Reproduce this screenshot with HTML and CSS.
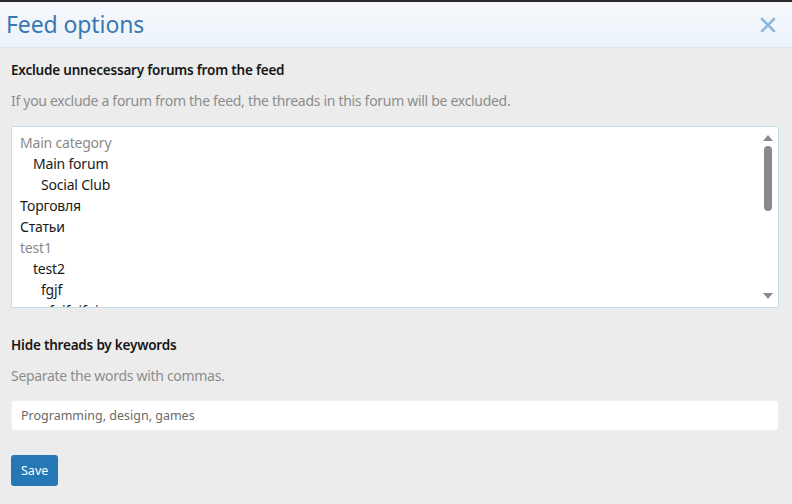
FILE: index.html
```html
<!DOCTYPE html>
<html>
<head>
<meta charset="utf-8">
<link rel="stylesheet" href="styles.css">
</head>
<body>
<div class="topline"></div>
<div class="overlay">
  <div class="header">
    <h1 class="title">Feed options</h1>
    <span class="close">
      <svg width="16" height="16" viewBox="0 0 16 16"><path d="M2 2 L14 14 M14 2 L2 14" stroke="#8cb8df" stroke-width="2.6" stroke-linecap="round"/></svg>
    </span>
  </div>
  <div class="body">
    <div class="label">Exclude unnecessary forums from the feed</div>
    <div class="hint">If you exclude a forum from the feed, the threads in this forum will be excluded.</div>
    <div class="listbox">
      <div class="items">
        <div class="item cat">Main category</div>
        <div class="item l1">Main forum</div>
        <div class="item l2">Social Club</div>
        <div class="item">Торговля</div>
        <div class="item">Статьи</div>
        <div class="item cat">test1</div>
        <div class="item l1">test2</div>
        <div class="item l2">fgjf</div>
        <div class="item l3">fgjfgjfgj</div>
      </div>
      <div class="scrollbar">
        <span class="arrow up"></span>
        <div class="track"><span class="thumb"></span></div>
        <span class="arrow down"></span>
      </div>
    </div>
    <div class="label second">Hide threads by keywords</div>
    <div class="hint">Separate the words with commas.</div>
    <input class="input" type="text" placeholder="Programming, design, games">
    <div class="actions"><button class="btn">Save</button></div>
  </div>
</div>
</body>
</html>
```
FILE: styles.css
```css
html, body { margin: 0; padding: 0; }
body {
  width: 792px; height: 504px; overflow: hidden;
  background: #ececec;
  font-family: "Noto Sans", "Open Sans", "DejaVu Sans", sans-serif;
}
.topline { height: 2px; background: #2b2b2b; }
.overlay { display: flex; flex-direction: column; }
.header {
  height: 45px;
  background: linear-gradient(to bottom, #f7f9fc, #ecf3fb);
  border-bottom: 1px solid #dfe6ee;
  display: flex; align-items: center; justify-content: space-between;
  padding: 0 16px 0 6px;
}
.title {
  margin: 0; font-weight: 400; font-size: 23px; color: #3a78b3;
  letter-spacing: -0.1px; padding-bottom: 2px;
}
.close { display: flex; }
.body { padding: 12px 13px 0 11px; }
.label { font-size: 13.5px; font-weight: 600; color: #161616; line-height: 20px; letter-spacing: -0.2px; }
.label.second { margin-top: 27px; }
.hint { font-size: 14px; color: #8c8c8c; line-height: 20px; margin-top: 11px; letter-spacing: -0.3px; }
.listbox {
  margin-top: 15px; height: 180px; background: #fff;
  border: 1px solid #c6dbe8; border-radius: 2px;
  display: flex; overflow: hidden;
}
.items { flex: 1; padding: 5px 8px; }
.item { font-size: 14px; line-height: 21px; color: #1a1a1a; white-space: nowrap; letter-spacing: -0.2px; }
.item.cat { color: #8a8a8a; }
.item.l1 { padding-left: 13px; }
.item.l2 { padding-left: 21px; }
.item.l3 { padding-left: 29px; }
.scrollbar { width: 14px; display: flex; flex-direction: column; align-items: center; padding: 8px 3px 8px 0; }
.arrow { width: 0; height: 0; border-left: 5px solid transparent; border-right: 5px solid transparent; }
.arrow.up { border-bottom: 6px solid #8a8a8a; }
.arrow.down { border-top: 6px solid #8a8a8a; }
.track { flex: 1; width: 100%; display: flex; justify-content: center; padding-top: 5px; }
.thumb { width: 8px; height: 65px; background: #8a8a8a; border-radius: 4px; }
.input {
  display: block; box-sizing: border-box; width: 100%; margin-top: 14px; height: 31px;
  border: 1px solid #f0f0f0; border-radius: 4px; background: #fff;
  padding: 0 9px; font-family: inherit; font-size: 12.5px; outline: none;
}
.input::placeholder { color: #6a6a6a; }
.actions { margin-top: 24px; }
.btn {
  background: #2577b5; color: #fff; border: none; border-radius: 3px;
  height: 31px; padding: 0 10px; font-family: inherit; font-size: 12.5px;
}
```
